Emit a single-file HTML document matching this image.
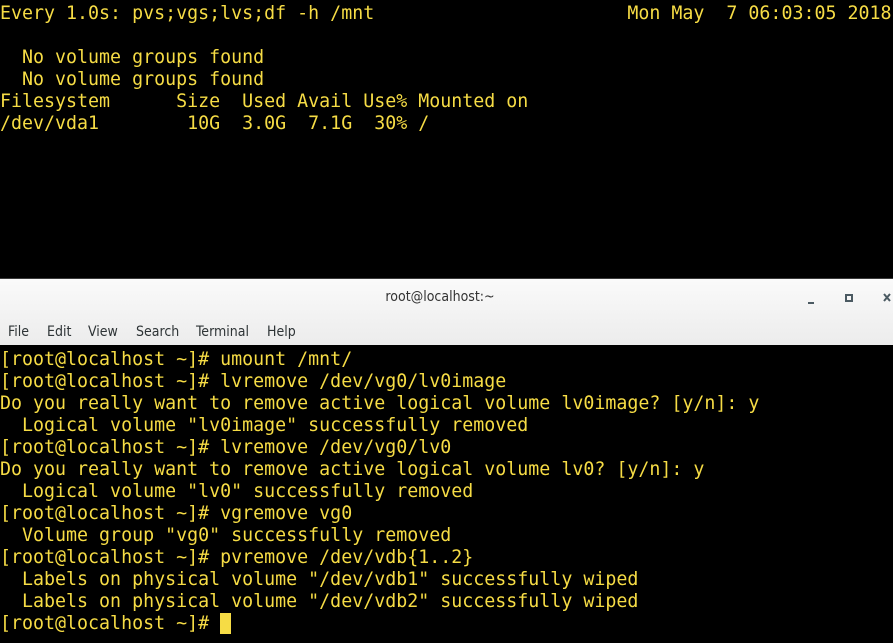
<!DOCTYPE html>
<html><head><meta charset="utf-8"><style>
html,body{margin:0;padding:0;background:#000;width:893px;height:643px;overflow:hidden;position:relative}
pre{margin:0;font-family:"DejaVu Sans Mono","Liberation Mono",monospace;font-size:18.3px;line-height:22px;color:#f6dc45;white-space:pre;position:absolute;left:0}
#top{top:3px}
#win{position:absolute;left:0;top:278px;width:893px;height:67px;background:linear-gradient(#fafafa,#ececec);border-top:1px solid #3a3a3a;box-sizing:border-box}
.title{position:absolute;top:10px;left:0;width:880px;text-align:center;font-family:"DejaVu Sans Condensed","DejaVu Sans","Liberation Sans",sans-serif;font-size:14px;color:#333}
.menu span{position:absolute;top:45px;font-family:"DejaVu Sans Condensed","DejaVu Sans","Liberation Sans",sans-serif;font-size:14px;color:#2e3436}
#bot{top:349px}
.cur{background:#f6dc45;color:#000}
</style></head><body>
<pre id="top">Every 1.0s: pvs;vgs;lvs;df -h /mnt                       Mon May  7 06:03:05 2018

  No volume groups found
  No volume groups found
Filesystem      Size  Used Avail Use% Mounted on
/dev/vda1        10G  3.0G  7.1G  30% /</pre>
<div id="win">
<div class="title">root@localhost:~</div>
<svg style="position:absolute;left:800px;top:10px" width="93" height="20">
<rect x="8" y="13" width="6" height="2" fill="#4b5a62"/>
<rect x="46" y="6" width="6" height="6" fill="none" stroke="#4b5a62" stroke-width="2"/>
<path d="M84 5L90 12M90 5L84 12" stroke="#4b5a62" stroke-width="2"/>
</svg>
<div class="menu"><span style="left:8px">File</span><span style="left:47px">Edit</span><span style="left:88px">View</span><span style="left:136px">Search</span><span style="left:196px">Terminal</span><span style="left:267px">Help</span></div>
</div>
<pre id="bot">[root@localhost ~]# umount /mnt/
[root@localhost ~]# lvremove /dev/vg0/lv0image
Do you really want to remove active logical volume lv0image? [y/n]: y
  Logical volume "lv0image" successfully removed
[root@localhost ~]# lvremove /dev/vg0/lv0
Do you really want to remove active logical volume lv0? [y/n]: y
  Logical volume "lv0" successfully removed
[root@localhost ~]# vgremove vg0
  Volume group "vg0" successfully removed
[root@localhost ~]# pvremove /dev/vdb{1..2}
  Labels on physical volume "/dev/vdb1" successfully wiped
  Labels on physical volume "/dev/vdb2" successfully wiped
[root@localhost ~]# <span class="cur"> </span></pre>
</body></html>
